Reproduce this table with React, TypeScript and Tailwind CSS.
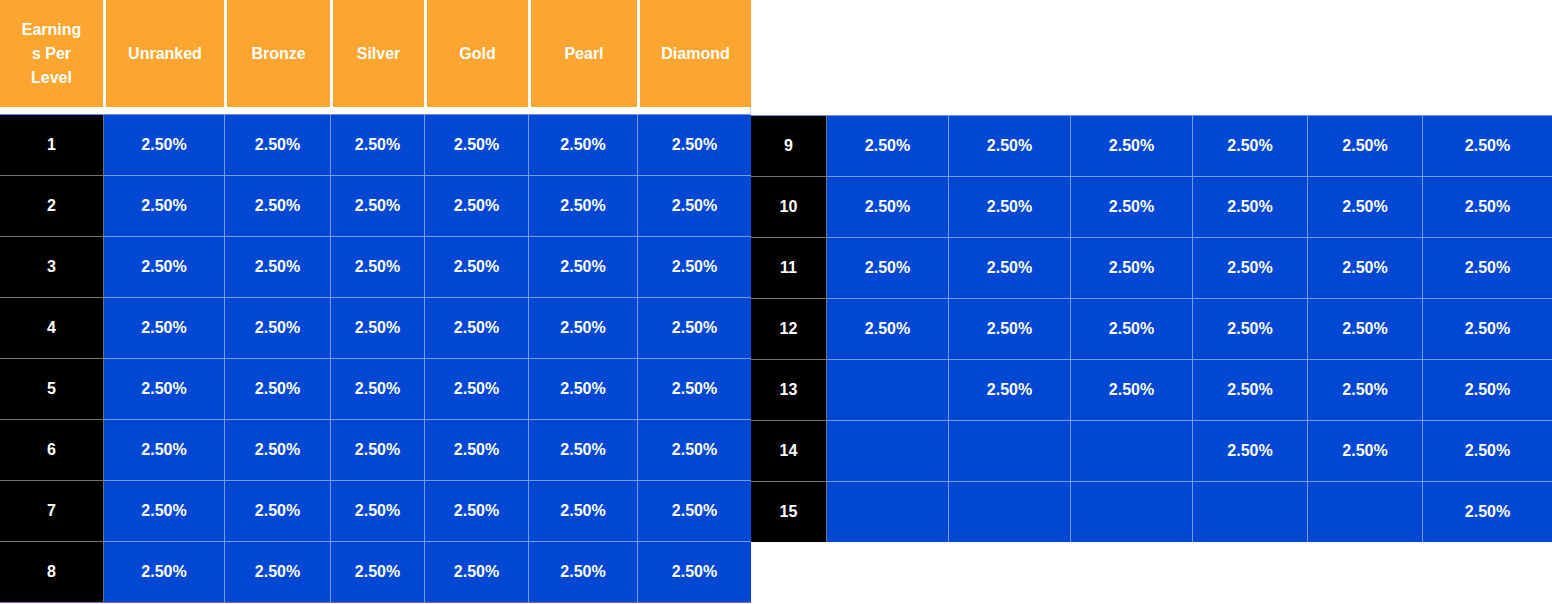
import React from 'react'

// Earnings per level — two side-by-side grids (levels 1-8 with header, 9-15 without)

const leftWidths = ['w-[104px]', 'w-[121px]', 'w-[106px]', 'w-[94px]', 'w-[104px]', 'w-[109px]', 'w-[113px]']
const rightWidths = ['w-[76px]', 'w-[122px]', 'w-[122px]', 'w-[122px]', 'w-[115px]', 'w-[115px]', 'w-[129px]']

const tiers = ['Unranked', 'Bronze', 'Silver', 'Gold', 'Pearl', 'Diamond']

type Row = { level: number; values: (string | null)[] }

const full = (level: number): Row => ({ level, values: tiers.map(() => '2.50%') })

const leftRows: Row[] = [1, 2, 3, 4, 5, 6, 7, 8].map(full)

const rightRows: Row[] = [
  full(9),
  full(10),
  full(11),
  full(12),
  { level: 13, values: [null, '2.50%', '2.50%', '2.50%', '2.50%', '2.50%'] },
  { level: 14, values: [null, null, null, '2.50%', '2.50%', '2.50%'] },
  { level: 15, values: [null, null, null, null, null, '2.50%'] },
]

type Edge = 'line' | 'accent' | 'none'

function BodyRow({ row, widths, edge = 'line' }: { row: Row; widths: string[]; edge?: Edge }) {
  const bottom =
    edge === 'none'
      ? 'h-[60px]'
      : edge === 'accent'
        ? 'h-[61px] border-b border-b-[#7d63e6]'
        : 'h-[61px] border-b border-b-white/45'
  return (
    <div className="flex">
      <div
        className={`${widths[0]} ${bottom} shrink-0 bg-black flex items-center justify-center border-r border-r-white/45`}
      >
        {row.level}
      </div>
      {row.values.map((v, i) => (
        <div
          key={i}
          className={`${widths[i + 1]} ${bottom} shrink-0 bg-[#0047d4] flex items-center justify-center ${
            i < row.values.length - 1 ? 'border-r border-r-white/45' : ''
          }`}
        >
          {v}
        </div>
      ))}
    </div>
  )
}

export default function App() {
  return (
    <div className="w-[1552px] h-[604px] bg-white flex items-start overflow-hidden font-['Liberation_Sans',Arial,sans-serif] font-bold text-[16px] text-white">
      {/* Levels 1–8 */}
      <div className="w-[751px] shrink-0 border-r border-[#d4c8f4]">
        <div className="flex h-[107px]">
          <div className="w-[104px] shrink-0 bg-[#fca631] border-r border-white flex items-center justify-center">
            <div className="w-[64px] text-center leading-[24px] [overflow-wrap:anywhere]">
              Earnings Per Level
            </div>
          </div>
          {tiers.map((t, i) => (
            <div
              key={t}
              className={`${leftWidths[i + 1]} shrink-0 bg-[#fca631] border-l-2 border-white flex items-center justify-center ${
                i < tiers.length - 1 ? 'border-r' : ''
              }`}
            >
              {t}
            </div>
          ))}
        </div>
        <div className="h-[7px] bg-white" />
        <div className="border-t border-[#6f8fe6]">
          {leftRows.map((r, i) => (
            <BodyRow
              key={r.level}
              row={r}
              widths={leftWidths}
              edge={i === leftRows.length - 1 ? 'accent' : 'line'}
            />
          ))}
        </div>
      </div>

      {/* Levels 9–15 */}
      <div className="w-[801px] shrink-0 mt-[115px] border-t border-[#6f8fe6]">
        {rightRows.map((r, i) => (
          <BodyRow
            key={r.level}
            row={r}
            widths={rightWidths}
            edge={i === rightRows.length - 1 ? 'none' : 'line'}
          />
        ))}
      </div>
    </div>
  )
}
